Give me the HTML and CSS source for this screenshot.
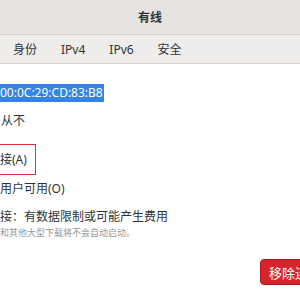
FILE: index.html
```html
<!DOCTYPE html>
<html lang="zh-CN">
<head>
    <meta charset="UTF-8">
    <title>有线</title>
    <link rel="stylesheet" href="styles.css">
</head>
<body>

<div class="window">
    <div class="titlebar">有线</div>
    <div class="tabs">
        <span class="tab">身份</span>
        <span class="tab">IPv4</span>
        <span class="tab">IPv6</span>
        <span class="tab">安全</span>
    </div>
    <div class="content">
        <div class="row mac"><span class="selected">00:0C:29:CD:83:B8</span></div>
        <div class="row never">从不</div>
        <div class="focus-box">接(A)</div>
        <div class="row users">用户可用(O)</div>
        <div class="row metered">接：有数据限制或可能产生费用</div>
        <div class="hint">和其他大型下载将不会自动启动。</div>
        <div class="actions">
            <button class="remove">移除连接</button>
        </div>
    </div>
</div>

</body>
</html>
```

FILE: styles.css
```css
body {
    margin: 0;
    background-color: #fff;
    font-family: "Noto Sans", "Noto Sans CJK SC", sans-serif;
    color: #2e3436;
    overflow: hidden;
}

.window {
    width: 300px;
    height: 300px;
    overflow: hidden;
}

.titlebar {
    height: 35px;
    display: flex;
    align-items: center;
    justify-content: center;
    background-color: #e6e3e0;
    border-bottom: 1px solid #d4d0cc;
    font-size: 12px;
    font-weight: bold;
    box-sizing: border-box;
}

.tabs {
    height: 29px;
    display: flex;
    align-items: center;
    gap: 24px;
    padding-left: 13px;
    background-color: #efedeb;
    border-bottom: 1px solid #d4d0cc;
    box-sizing: border-box;
    font-size: 12px;
}

.content {
    font-size: 12px;
}

.row {
    line-height: 18px;
}

.mac {
    margin-top: 20px;
}

.selected {
    display: inline-block;
    background-color: #3584e4;
    color: #fff;
    padding-right: 1px;
}

.never {
    margin-top: 10px;
    padding-left: 1px;
}

.focus-box {
    width: 39px;
    height: 31px;
    margin-top: 14px;
    margin-left: -3px;
    padding-left: 3px;
    border: 1px solid #e0313a;
    border-left: none;
    box-sizing: border-box;
    line-height: 29px;
}

.users {
    margin-top: 5px;
}

.metered {
    margin-top: 10px;
}

.hint {
    font-size: 9px;
    color: #959899;
    line-height: 13px;
}

.actions {
    display: flex;
    justify-content: flex-end;
    margin-top: 20px;
    margin-right: -30px;
}

.remove {
    height: 26px;
    padding: 0 8px;
    font-family: inherit;
    font-size: 13px;
    color: #fff;
    background-color: #d7242c;
    border: 1px solid #b31c22;
    border-radius: 4px;
}
```
